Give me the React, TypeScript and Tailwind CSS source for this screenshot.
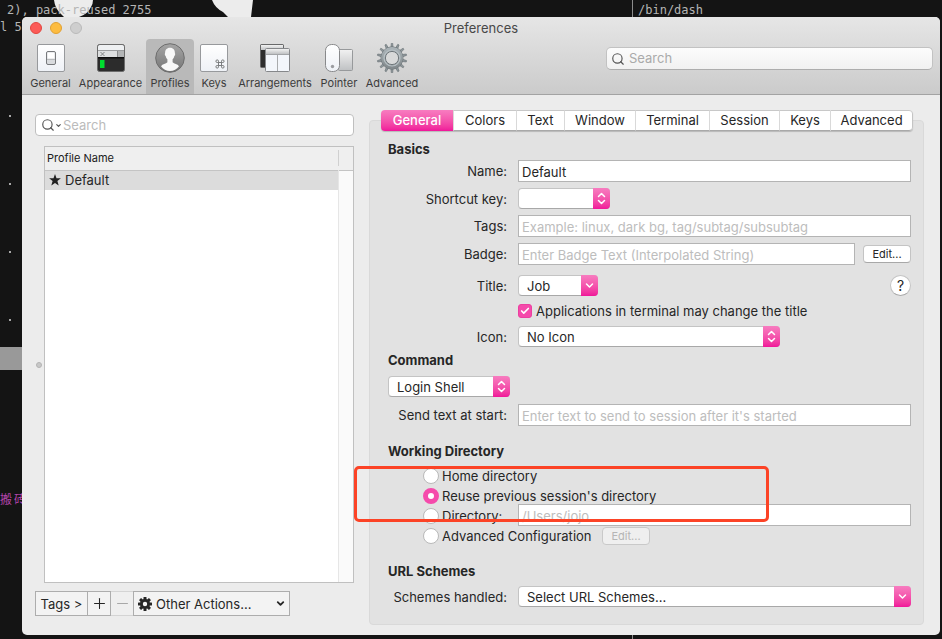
import React, { useState } from "react";
import { Check, ChevronDown, Minus, Plus, Search } from "lucide-react";

/* ---------- toolbar icons ---------- */

const iconClass = "block h-[30px] w-[32px]";

function PlateDefs() {
  return (
    <svg className="absolute h-0 w-0" aria-hidden="true">
      <defs>
        <linearGradient id="plate" x1="0" y1="0" x2="0" y2="1">
          <stop offset="0" stopColor="#ffffff" />
          <stop offset="1" stopColor="#eef1f6" />
        </linearGradient>
        <linearGradient id="bar" x1="0" y1="0" x2="0" y2="1">
          <stop offset="0" stopColor="#f2f2f2" />
          <stop offset="1" stopColor="#bfc1c3" />
        </linearGradient>
        <linearGradient id="disc" x1="0" y1="0" x2="0" y2="1">
          <stop offset="0" stopColor="#a6a6a6" />
          <stop offset="1" stopColor="#747474" />
        </linearGradient>
        <linearGradient id="steel" x1="0" y1="0" x2="0" y2="1">
          <stop offset="0" stopColor="#a9b2b6" />
          <stop offset="1" stopColor="#848b8e" />
        </linearGradient>
      </defs>
    </svg>
  );
}

function GeneralIcon() {
  return (
    <svg viewBox="0 0 32 30" className={iconClass}>
      <rect x="2.5" y="1.5" width="27" height="27" rx="1.5" fill="url(#plate)" stroke="#97999c" />
      <rect x="11.5" y="8.5" width="9" height="13" rx="1.5" fill="#d9dbde" stroke="#77797c" />
      <rect x="12.5" y="9.5" width="7" height="6" fill="#ffffff" />
      <path d="M12 16.5h8" stroke="#b9bbbd" />
    </svg>
  );
}

function AppearanceIcon() {
  return (
    <svg viewBox="0 0 32 30" className={iconClass}>
      <rect x="2.5" y="1.5" width="27" height="27" rx="2" fill="#2c2c2c" stroke="#6c6c6c" />
      <path d="M3 7V3.500Q3 2 4.500 2h23Q29 2 29 3.500V7z" fill="#eef0f2" />
      <rect x="3" y="7" width="26" height="7" fill="#dcdedf" />
      <path d="M3 7.500h26" stroke="#9a9c9e" />
      <rect x="22" y="8" width="7" height="6" fill="#b3b5b6" />
      <path d="M22.500 8v6" stroke="#87898a" />
      <path d="M5.500 9l4 4M9.500 9l-4 4" stroke="#77797a" strokeWidth="0.900" />
      <rect x="3" y="14" width="26" height="1.500" fill="#0c0c0c" />
      <rect x="5" y="17" width="4.500" height="8" fill="#00dd2f" />
    </svg>
  );
}

function ProfilesIcon() {
  return (
    <svg viewBox="0 0 32 30" className={iconClass}>
      <circle cx="16" cy="15" r="14.300" fill="url(#disc)" stroke="#6d6d6d" />
      <path
        d="M16 4.800c-3.300 0-5 2.300-4.900 5.400-.6.400-.3 2.300.6 2.700.3 1.700 1 2.600 1.700 3.400v3c-1.400 1.500-5 1.700-6.400 3.900 2.200 3.100 5.300 4.800 9 4.800s6.800-1.700 9-4.800c-1.400-2.200-5-2.400-6.400-3.900v-3c.7-.8 1.400-1.700 1.700-3.400.9-.4 1.200-2.300.6-2.700.1-3.100-1.600-5.400-4.900-5.400z"
        fill="#f8f8f8"
      />
    </svg>
  );
}

function KeysIcon() {
  return (
    <svg viewBox="0 0 32 30" className={iconClass}>
      <rect x="2.500" y="1.500" width="27" height="27" rx="1.500" fill="url(#plate)" stroke="#97999c" />
      <path
        d="M20.500 19.500h3v3h-3zM20.500 19.500h-1.300a1.300 1.300 0 1 1 1.300-1.300zM23.500 19.500v-1.300a1.300 1.300 0 1 1 1.300 1.300zM23.500 22.500h1.300a1.300 1.300 0 1 1-1.300 1.300zM20.500 22.500v1.300a1.300 1.300 0 1 1-1.300-1.300z"
        fill="none"
        stroke="#6e7072"
        strokeWidth="0.900"
      />
    </svg>
  );
}

function ArrangementsIcon() {
  return (
    <svg viewBox="0 0 32 30" className={iconClass}>
      <rect x="1.500" y="1.500" width="23" height="23" rx="1" fill="#2e2e2e" stroke="#68696a" />
      <rect x="2" y="2" width="22" height="5" fill="url(#bar)" />
      <rect x="6.500" y="5.500" width="24" height="23" rx="1" fill="#f3f6fb" stroke="#85878a" />
      <rect x="7" y="6" width="23" height="5" fill="url(#bar)" />
      <path d="M7 11.500h23" stroke="#a2a4a7" />
      <path d="M18.500 12v16" stroke="#a9abad" />
    </svg>
  );
}

function PointerIcon() {
  return (
    <svg viewBox="0 0 32 30" className={iconClass}>
      <rect x="15.500" y="6.500" width="14" height="21" rx="1" fill="url(#bar)" stroke="#97999b" />
      <rect x="2.500" y="1.500" width="14" height="27" rx="6" fill="url(#plate)" stroke="#88898b" />
      <circle cx="9.500" cy="23.500" r="1.700" fill="#9b9ca0" />
    </svg>
  );
}

const TEETH = Array.from({ length: 14 }, (_, i) => (i * 360) / 14);

function GearIcon() {
  return (
    <svg viewBox="0 0 32 30" className={iconClass}>
      {TEETH.map((angle) => (
        <path
          key={angle}
          d="M14.800 5l.5-4.800h1.400l.5 4.800z"
          transform={`rotate(${angle} 16 15)`}
          fill="#8f989c"
          stroke="#6b7377"
          strokeWidth="0.600"
        />
      ))}
      <circle cx="16" cy="15" r="9.300" fill="none" stroke="#697175" strokeWidth="4.200" />
      <circle cx="16" cy="15" r="9" fill="none" stroke="url(#steel)" strokeWidth="3.800" />
      <circle cx="16" cy="15" r="8" fill="none" stroke="#b9c2c6" strokeWidth="1.200" />
      <circle cx="16" cy="15" r="6.600" fill="#d8d9d9" stroke="#6f777b" />
    </svg>
  );
}

const TOOLS = [
  { label: "General", width: "w-[49px]", Icon: GeneralIcon },
  { label: "Appearance", width: "w-[71px]", Icon: AppearanceIcon },
  { label: "Profiles", width: "w-[48px]", Icon: ProfilesIcon },
  { label: "Keys", width: "w-[40px]", Icon: KeysIcon },
  { label: "Arrangements", width: "w-[82px]", Icon: ArrangementsIcon },
  { label: "Pointer", width: "w-[46px]", Icon: PointerIcon },
  { label: "Advanced", width: "w-[60px]", Icon: GearIcon },
];

/* ---------- controls ---------- */

const pink = "bg-linear-to-b from-[#f77cc0] to-[#f0139a]";

function UpDown() {
  return (
    <svg viewBox="0 0 9 13" className="h-[13px] w-[9px]" fill="none" stroke="#fff" strokeWidth="1.500" strokeLinecap="round" strokeLinejoin="round">
      <path d="M1.500 4.500l3-3 3 3M1.500 8.500l3 3 3-3" />
    </svg>
  );
}

function Down() {
  return (
    <svg viewBox="0 0 9 13" className="h-[13px] w-[9px]" fill="none" stroke="#fff" strokeWidth="1.500" strokeLinecap="round" strokeLinejoin="round">
      <path d="M1.500 5l3 3 3-3" />
    </svg>
  );
}

function Popup({ id, label, value, width, pullDown }: { id: string; label?: string; value: string; width: string; pullDown?: boolean }) {
  return (
    <div className={`relative h-[21px] ${width}`}>
      <select
        id={id}
        aria-label={label}
        className="h-full w-full appearance-none rounded-[4px] border border-[#c4c4c4] border-b-[#a8a8a8] bg-white pt-[2px] pr-5 pl-2 text-[13px] leading-[17px] text-[#262626] outline-none"
      >
        <option>{value}</option>
      </select>
      <span className={`pointer-events-none absolute inset-y-0 right-0 flex w-[17px] items-center justify-center rounded-r-[4px] ${pink}`}>
        {pullDown ? <Down /> : <UpDown />}
      </span>
    </div>
  );
}

function Row({ label, htmlFor, children, className = "" }: { label: string; htmlFor: string; children: React.ReactNode; className?: string }) {
  return (
    <div className={`flex items-center ${className}`}>
      <label htmlFor={htmlFor} className="mr-[11px] w-[119px] shrink-0 text-right leading-5">
        {label}
      </label>
      {children}
    </div>
  );
}

const field =
  "h-[22px] min-w-0 flex-1 border border-[#b4b4b4] bg-white px-[3px] pt-[2px] text-[13px] text-[#262626] outline-none placeholder:text-[#bdbdbd]";
const heading = "h-[21px] text-[13px] leading-[21px] font-bold";
const radio =
  "h-4 w-4 shrink-0 appearance-none rounded-full border border-[#b9b9b9] bg-white checked:border-[5px] checked:border-[#f54aab]";
const smallButton = "h-[18px] w-12 shrink-0 rounded-[4px] border text-[11px] leading-4";

const TABS = ["General", "Colors", "Text", "Window", "Terminal", "Session", "Keys", "Advanced"];

function Tabs() {
  return (
    <div
      role="tablist"
      className="-mt-[11px] mr-[10px] ml-[11px] grid h-[21px] grid-cols-[72fr_63fr_48fr_71fr_74fr_70fr_51fr_83fr] overflow-hidden rounded-[4px] text-[13px] shadow-[0_1px_1px_#00000030]"
    >
      {TABS.map((tab, i) => (
        <button
          key={tab}
          role="tab"
          aria-selected={i === 0}
          className={
            i === 0
              ? `leading-[21px] font-medium text-white ${pink}`
              : "border-y border-l border-t-[#c8c8c8] border-b-[#a9a9a9] border-l-[#d9d9d9] bg-white leading-[19px] last:rounded-r-[4px] last:border-r last:border-r-[#c4c4c4]"
          }
        >
          {tab}
        </button>
      ))}
    </div>
  );
}

/* ---------- terminal behind the window ---------- */

function Terminal() {
  return (
    <div className="pointer-events-none absolute inset-0 overflow-hidden font-['DejaVu_Sans_Mono','Noto_Sans_CJK_SC',monospace] text-[12px] leading-[17px] whitespace-pre text-[#b5b5b5]">
      <svg viewBox="0 0 260 17" className="absolute top-0 left-0 h-[17px] w-[260px]">
        <path d="M54 0q1 8 6 13l4 4h15q9-3 12-10 2-3 2-7z" fill="#ececec" />
        <path d="M212 0q3 8 11 12 3 3 5 5h23l2-17z" fill="#ececec" />
      </svg>
      <span className="absolute top-[2px] left-[7px]">2), pack-reused 2755</span>
      <span className="absolute top-[19px] left-0">l 59</span>
      <span className="absolute top-[2px] left-[638px]">/bin/dash</span>
      <span className="absolute inset-y-0 left-[632px] w-px bg-[#8c8c8c]" />
      <span className="absolute top-[115px] left-[9px] h-[2px] w-[2px] bg-[#a8a8a8]" />
      <span className="absolute top-[183px] left-[9px] h-[2px] w-[2px] bg-[#a8a8a8]" />
      <span className="absolute top-[251px] left-[9px] h-[2px] w-[2px] bg-[#a8a8a8]" />
      <span className="absolute top-[319px] left-[9px] h-[2px] w-[2px] bg-[#a8a8a8]" />
      <span className="absolute top-[347px] left-0 h-[23px] w-[40px] bg-[#999999]" />
      <span className="absolute top-[492px] left-0 flex gap-[2px] text-[#b545ac]">
        <span>搬</span>
        <span>砖</span>
      </span>
    </div>
  );
}

/* ---------- window ---------- */

function TitleAndToolbar() {
  return (
    <header className="border-b border-[#a3a3a3] bg-linear-to-b from-[#e6e6e6] to-[#cbcbcb]">
      <div className="grid h-[22px] grid-cols-3 items-center px-2">
        <div className="flex gap-2">
          <button aria-label="Close" className="h-3 w-3 rounded-full border border-[#e2463f] bg-[#fc5b57]" />
          <button aria-label="Minimize" className="h-3 w-3 rounded-full border border-[#e0a032] bg-[#fdbc40]" />
          <button aria-label="Zoom" disabled className="h-3 w-3 rounded-full border border-[#b9b9b9] bg-[#cecece]" />
        </div>
        <h1 className="text-center text-[13px] leading-[22px] text-[#484848]">Preferences</h1>
      </div>
      <div className="flex h-[55px] pl-1">
        {TOOLS.map(({ label, width, Icon }) => (
          <button
            key={label}
            className={`flex shrink-0 flex-col items-center pt-1 text-[11px] leading-[18px] text-[#3c3c3c] ${width} ${
              label === "Profiles" ? "rounded-t-[4px] bg-[#b9b9b9] text-[#2a2a2a]" : ""
            }`}
          >
            <Icon />
            <span className="mt-px">{label}</span>
          </button>
        ))}
        <label className="mt-2 mr-[7px] ml-auto flex h-[23px] w-[327px] items-center gap-1 rounded-[5px] border border-[#c2c2c2] border-b-[#adadad] bg-linear-to-b from-[#fcfcfc] to-[#f1f1f1] pl-1">
          <Search className="h-[14px] w-[14px] text-[#555]" strokeWidth={2} />
          <input aria-label="Search preferences" placeholder="Search" className="min-w-0 flex-1 bg-transparent text-[13px] outline-none placeholder:text-[#aaaaaa]" />
        </label>
      </div>
    </header>
  );
}

function ProfileList() {
  return (
    <aside className="ml-[13px] flex w-[319px] shrink-0 flex-col pt-[19px] pb-[19px]">
      <label className="flex h-[22px] items-center rounded-[4px] border border-[#bfbfbf] bg-white pl-[5px]">
        <Search className="h-[14px] w-[14px] text-[#555]" strokeWidth={2} />
        <ChevronDown className="h-[7px] w-[7px] text-[#555]" strokeWidth={4} />
        <input aria-label="Search profiles" placeholder="Search" className="ml-px min-w-0 flex-1 bg-transparent pt-[2px] text-[13px] outline-none placeholder:text-[#bbbbbb]" />
      </label>
      <div className="mt-[10px] flex flex-1">
        <div className="flex w-[9px] shrink-0 items-center pl-px">
          <span className="h-[6px] w-[6px] rounded-full border border-[#b4b4b4] bg-[#c8c8c8]" />
        </div>
        <div className="flex flex-1 flex-col border border-[#c0c0c0] bg-white">
          <table className="w-full border-collapse">
            <thead>
              <tr className="h-[23px] border-b border-[#c4c4c4] bg-[#efefef]">
                <th className="p-0 pl-[2px] text-left text-[11px] leading-[22px] font-normal text-[#202020]">Profile Name</th>
                <th aria-label="Scroll" className="w-[15px] p-0">
                  <span className="block h-4 border-l border-[#d0d0d0]" />
                </th>
              </tr>
            </thead>
            <tbody>
              <tr className="h-[19px]">
                <td className="bg-[#dcdcdc] p-0 pl-1">
                  <span className="flex items-center gap-1 leading-[19px]">
                    <svg viewBox="0 0 12 12" className="h-3 w-3" fill="#222">
                      <path d="M6 0l1.500 4.200h4.400L8.400 7l1.300 4.500L6 8.900l-3.700 2.600L3.600 7 .1 4.200h4.400z" />
                    </svg>
                    Default
                  </span>
                </td>
                <td className="border-l border-[#e6e6e6] bg-[#fafafa] p-0" />
              </tr>
            </tbody>
          </table>
          <div className="flex flex-1 justify-end">
            <span className="w-[15px] border-l border-[#e6e6e6] bg-[#fafafa]" />
          </div>
        </div>
      </div>
      <div className="mt-2 flex h-[25px]">
        <button className="w-[53px] border border-[#adadad] bg-[#f3f3f3] pt-[2px] whitespace-nowrap">Tags &gt;</button>
        <button aria-label="Add profile" className="flex w-[23px] items-center justify-center border-y border-r border-[#adadad] bg-[#f3f3f3]">
          <Plus className="h-[17px] w-[17px]" strokeWidth={1.5} />
        </button>
        <button aria-label="Remove profile" disabled className="flex w-[22px] items-center justify-center border-y border-[#d4d4d4] bg-[#efefef] text-[#a8a8a8]">
          <Minus className="h-[17px] w-[17px]" strokeWidth={1.5} />
        </button>
        <div className="relative w-[157px]">
          <select aria-label="Other actions" className="h-full w-full appearance-none border border-[#adadad] bg-[#f3f3f3] pt-[2px] pl-[22px] text-[13px] text-[#262626] outline-none">
            <option>Other Actions...</option>
          </select>
          <svg viewBox="0 0 14 14" className="pointer-events-none absolute top-[6px] left-[5px] h-[14px] w-[14px]">
            {[0, 45, 90, 135].map((a) => (
              <rect key={a} x="5.500" y="0" width="3" height="14" rx="0.500" fill="#262626" transform={`rotate(${a} 7 7)`} />
            ))}
            <circle cx="7" cy="7" r="3.600" fill="#f3f3f3" stroke="#262626" strokeWidth="2.800" />
          </svg>
          <ChevronDown className="pointer-events-none absolute top-[7px] right-1 h-[11px] w-[11px]" strokeWidth={4} />
        </div>
      </div>
    </aside>
  );
}

function WorkingDirectory() {
  const [choice, setChoice] = useState("reuse");
  const props = (v: string) => ({ type: "radio", name: "cwd", className: radio, checked: choice === v, onChange: () => setChoice(v) });
  return (
    <section>
      <h2 className={`mt-[15px] ${heading}`}>Working Directory</h2>
      <div className="relative mt-1 pl-[35px] leading-5">
        <label className="flex h-5 items-center gap-[3px]">
          <input {...props("home")} />
          Home directory
        </label>
        <label className="flex h-5 items-center gap-[3px]">
          <input {...props("reuse")} />
          Reuse previous session's directory
        </label>
        <div className="flex h-5 items-end">
          <label className="flex w-[95px] shrink-0 items-center gap-[3px]">
            <input {...props("directory")} />
            Directory:
          </label>
          <input aria-label="Directory path" placeholder="/Users/jojo" disabled className={field} />
        </div>
        <div className="flex h-5 items-center">
          <label className="flex w-[179px] shrink-0 items-center gap-[3px] whitespace-nowrap">
            <input {...props("advanced")} />
            Advanced Configuration
          </label>
          <button disabled className={`${smallButton} border-[#c9c9c9] bg-[#efefef] text-[#b5b5b5]`}>
            Edit...
          </button>
        </div>
        <div className="pointer-events-none absolute top-0 -left-[34px] h-14 w-[415px] rounded-[5px] border-[3px] border-[#fc4326]" />
      </div>
    </section>
  );
}

function ProfileSettings() {
  return (
    <main className="mt-[25px] mr-4 mb-[10px] ml-[15px] min-w-0 flex-1 rounded-[4px] border border-[#d9d9d9] bg-[#e2e2e2]">
      <Tabs />
      <div className="mt-2 mr-3 ml-[18px]">
        <section>
          <h2 className={heading}>Basics</h2>
          <div className="flex flex-col gap-[6px]">
            <Row label="Name:" htmlFor="name">
              <input id="name" defaultValue="Default" className={field} />
            </Row>
            <Row label="Shortcut key:" htmlFor="shortcut">
              <Popup id="shortcut" value="" width="w-[92px]" />
            </Row>
            <Row label="Tags:" htmlFor="tags">
              <input id="tags" placeholder="Example: linux, dark bg, tag/subtag/subsubtag" className={field} />
            </Row>
            <Row label="Badge:" htmlFor="badge">
              <input id="badge" placeholder="Enter Badge Text (Interpolated String)" className={field} />
              <button className={`ml-2 ${smallButton} border-[#c4c4c4] border-b-[#a8a8a8] bg-white`}>Edit...</button>
            </Row>
            <Row label="Title:" htmlFor="title" className="mt-1">
              <Popup id="title" value="Job" width="w-[80px]" pullDown />
              <button aria-label="Help" className="ml-auto h-[21px] w-[21px] rounded-full border border-[#c4c4c4] border-b-[#a8a8a8] bg-white text-[14px] leading-[19px]">
                ?
              </button>
            </Row>
            <label className="ml-[130px] flex h-[18px] items-center gap-1">
              <span className="relative flex">
                <input type="checkbox" defaultChecked className="h-[14px] w-[14px] appearance-none rounded-[3px] border border-[#b9b9b9] bg-white checked:border-[#ec3f9f] checked:bg-[#f54aab]" />
                <Check className="pointer-events-none absolute top-[2px] left-[2px] h-[10px] w-[10px] text-white" strokeWidth={4} />
              </span>
              <span className="leading-5">Applications in terminal may change the title</span>
            </label>
            <Row label="Icon:" htmlFor="icon">
              <Popup id="icon" value="No Icon" width="w-[262px]" />
            </Row>
          </div>
        </section>
        <section>
          <h2 className={`mt-[3px] ${heading}`}>Command</h2>
          <div className="mt-[5px]">
            <Popup id="command" label="Command" value="Login Shell" width="w-[122px]" />
          </div>
          <Row label="Send text at start:" htmlFor="send" className="mt-[7px]">
            <input id="send" placeholder="Enter text to send to session after it's started" className={field} />
          </Row>
        </section>
        <WorkingDirectory />
        <section>
          <h2 className={`mt-[15px] ${heading}`}>URL Schemes</h2>
          <Row label="Schemes handled:" htmlFor="schemes" className="mt-1">
            <Popup id="schemes" value="Select URL Schemes..." width="flex-1" pullDown />
          </Row>
        </section>
      </div>
    </main>
  );
}

export default function App() {
  return (
    <div className="relative flex min-h-screen bg-[#141414] pt-[17px] pr-[2px] pb-1 pl-[22px] font-['Inter','Liberation_Sans',sans-serif] text-[13px] text-[#262626]">
      <PlateDefs />
      <Terminal />
      <div className="relative flex min-w-0 flex-1 flex-col overflow-hidden rounded-[5px] bg-[#ececec]">
        <TitleAndToolbar />
        <div className="flex flex-1">
          <ProfileList />
          <ProfileSettings />
        </div>
      </div>
    </div>
  );
}
